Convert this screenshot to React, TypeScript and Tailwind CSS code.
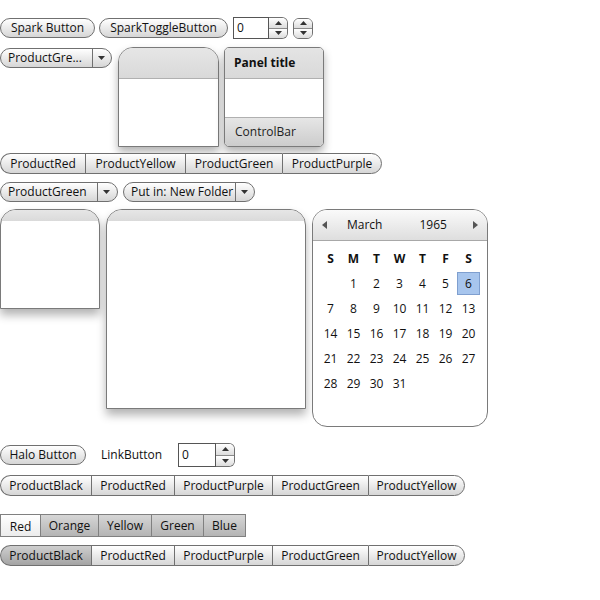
import React from "react";

const font = { fontFamily: '"Open Sans", "Noto Sans", sans-serif' };

function Btn({ w, children, cls = "" }: { w: string; children: React.ReactNode; cls?: string }) {
  return (
    <div
      className={`${w} h-[20px] rounded-full border border-[#707070] bg-gradient-to-b from-white to-[#d6d6d6] flex items-center justify-center text-[12px] text-[#111] leading-none ${cls}`}
    >
      {children}
    </div>
  );
}

function Down({ c = "#333" }: { c?: string }) {
  return (
    <svg width="7" height="4" viewBox="0 0 7 4">
      <path d="M0 0 L7 0 L3.5 4 Z" fill={c} />
    </svg>
  );
}
function Up({ c = "#333" }: { c?: string }) {
  return (
    <svg width="7" height="4" viewBox="0 0 7 4">
      <path d="M0 4 L7 4 L3.5 0 Z" fill={c} />
    </svg>
  );
}

function Spin({ w, h, full = false }: { w: string; h: string; full?: boolean }) {
  return (
    <div
      className={`${w} ${h} flex flex-col border border-[#707070] overflow-hidden ${full ? "rounded-[6px]" : "rounded-r-[6px] border-l-0"}`}
    >
      <div className="flex-1 flex items-center justify-center bg-gradient-to-b from-white to-[#dcdcdc] border-b border-[#8a8a8a]">
        <Up />
      </div>
      <div className="flex-1 flex items-center justify-center bg-gradient-to-b from-white to-[#dcdcdc]">
        <Down />
      </div>
    </div>
  );
}

function Stepper({ tw, h }: { tw: string; h: string }) {
  return (
    <div className={`flex ${h}`}>
      <div className={`${tw} h-full border border-[#555] bg-white flex items-center pl-[3px] text-[12px] text-[#111]`}>0</div>
      <Spin w="w-[19px]" h="h-full" />
    </div>
  );
}

function DropDown({ w, textW, label }: { w: string; textW: string; label: string }) {
  return (
    <div
      className={`${w} h-[20px] rounded-full border border-[#707070] bg-gradient-to-b from-white to-[#d6d6d6] flex items-center text-[12px] text-[#111] leading-none overflow-hidden`}
    >
      <div className={`${textW} pl-[7px] whitespace-nowrap h-full flex items-center border-r border-[#707070]`}>{label}</div>
      <div className="flex-1 flex items-center justify-center pr-[2px]">
        <Down />
      </div>
    </div>
  );
}

function ButtonBar({ items, widths, selected = -1 }: { items: string[]; widths: string[]; selected?: number }) {
  return (
    <div className="flex h-[21px]">
      {items.map((it, i) => {
        const first = i === 0;
        const last = i === items.length - 1;
        const sel = i === selected;
        return (
          <div
            key={it}
            className={`${widths[i]} h-full border-y border-l border-[#707070] flex items-center justify-center text-[12px] text-[#111] leading-none ${
              last ? "border-r rounded-r-full" : ""
            } ${first ? "rounded-l-full" : ""} ${
              sel ? "bg-gradient-to-b from-[#cfcfcf] to-[#a4a4a4]" : "bg-gradient-to-b from-white to-[#d6d6d6]"
            }`}
          >
            {it}
          </div>
        );
      })}
    </div>
  );
}

function Calendar() {
  const weeks: (number | null)[][] = [
    [null, 1, 2, 3, 4, 5, 6],
    [7, 8, 9, 10, 11, 12, 13],
    [14, 15, 16, 17, 18, 19, 20],
    [21, 22, 23, 24, 25, 26, 27],
    [28, 29, 30, 31, null, null, null],
  ];
  const names = ["S", "M", "T", "W", "T", "F", "S"];
  return (
    <div className="w-[176px] h-[218px] border border-[#7a7a7a] rounded-[15px] overflow-hidden bg-white">
      <div className="h-[31px] flex items-center bg-gradient-to-b from-[#fafafa] to-[#dedede] border-b border-[#a8a8a8] text-[12px] text-[#111]">
        <div className="ml-[9px]">
          <svg width="5" height="8" viewBox="0 0 5 8">
            <path d="M5 0 L5 8 L0 4 Z" fill="#555" />
          </svg>
        </div>
        <div className="ml-[20px]">March</div>
        <div className="ml-[37px]">1965</div>
        <div className="ml-auto mr-[9px]">
          <svg width="5" height="8" viewBox="0 0 5 8">
            <path d="M0 0 L0 8 L5 4 Z" fill="#555" />
          </svg>
        </div>
      </div>
      <div className="pt-[5px] pl-[6px] text-[12px] text-[#111]">
        <div className="grid grid-cols-[repeat(7,23px)] h-[25px] items-center font-bold">
          {names.map((n, i) => (
            <div key={i} className="text-center">
              {n}
            </div>
          ))}
        </div>
        {weeks.map((wk, r) => (
          <div key={r} className="grid grid-cols-[repeat(7,23px)] h-[25px] items-center">
            {wk.map((d, i) =>
              d === 6 ? (
                <div key={i} className="flex justify-center">
                  <div className="w-[23px] h-[23px] bg-[#a7c5ed] border border-[#7f9fcf] flex items-center justify-center">6</div>
                </div>
              ) : (
                <div key={i} className="text-center">
                  {d ?? ""}
                </div>
              )
            )}
          </div>
        ))}
      </div>
    </div>
  );
}

export default function App() {
  return (
    <div className="w-[600px] h-[600px] bg-white relative" style={font}>
      <div className="flex flex-col">
        {/* Row 1 */}
        <div className="mt-[17px] h-[22px] flex items-center">
          <Btn w="w-[95px]">Spark Button</Btn>
          <Btn w="w-[129px]" cls="ml-[4px]">SparkToggleButton</Btn>
          <div className="ml-[5px]">
            <Stepper tw="w-[36px]" h="h-[22px]" />
          </div>
          <div className="ml-[5px]">
            <Spin w="w-[20px]" h="h-[21px]" full />
          </div>
        </div>

        {/* Row 2 */}
        <div className="mt-[8px] flex items-start">
          <div className="mt-[1px]">
            <DropDown w="w-[112px]" textW="w-[92px]" label="ProductGre..." />
          </div>
          <div className="ml-[6px] w-[101px] h-[100px] border border-[#7a7a7a] rounded-t-[15px] overflow-hidden bg-white shadow-[0_5px_9px_rgba(0,0,0,0.3)]">
            <div className="h-[31px] bg-gradient-to-b from-[#e6e6e6] to-[#d9d9d9] border-b border-[#b0b0b0]" />
          </div>
          <div className="ml-[5px] w-[100px] h-[100px] border border-[#7a7a7a] rounded-[5px] overflow-hidden bg-white flex flex-col shadow-[0_5px_9px_rgba(0,0,0,0.3)]">
            <div className="h-[31px] bg-gradient-to-b from-[#e4e4e4] to-[#d9d9d9] border-b border-[#b0b0b0] flex items-center pl-[9px] text-[12px] font-bold text-[#111]">
              Panel title
            </div>
            <div className="flex-1" />
            <div className="h-[29px] bg-gradient-to-b from-[#e6e6e6] to-[#cccccc] border-t border-[#b0b0b0] flex items-center pl-[10px] text-[12px] text-[#222]">
              ControlBar
            </div>
          </div>
        </div>

        {/* Row 3 */}
        <div className="mt-[6px]">
          <ButtonBar
            items={["ProductRed", "ProductYellow", "ProductGreen", "ProductPurple"]}
            widths={["w-[85px]", "w-[100px]", "w-[97px]", "w-[100px]"]}
          />
        </div>

        {/* Row 4 */}
        <div className="mt-[8px] flex items-center">
          <DropDown w="w-[118px]" textW="w-[97px]" label="ProductGreen" />
          <div className="ml-[5px]">
            <DropDown w="w-[132px]" textW="w-[112px]" label="Put in: New Folder" />
          </div>
        </div>

        {/* Row 5 */}
        <div className="mt-[7px] flex items-start">
          <div className="w-[100px] h-[100px] border border-[#7a7a7a] rounded-t-[16px] overflow-hidden bg-white shadow-[0_6px_10px_rgba(0,0,0,0.3)]">
            <div className="h-[11px] bg-gradient-to-b from-[#e6e6e6] to-[#dadada]" />
          </div>
          <div className="ml-[6px] w-[200px] h-[200px] border border-[#7a7a7a] rounded-t-[16px] overflow-hidden bg-white shadow-[0_6px_10px_rgba(0,0,0,0.3)]">
            <div className="h-[11px] bg-gradient-to-b from-[#e6e6e6] to-[#dadada]" />
          </div>
          <div className="ml-[6px]">
            <Calendar />
          </div>
        </div>

        {/* Row 6 */}
        <div className="mt-[16px] h-[24px] flex items-center">
          <Btn w="w-[86px]">Halo Button</Btn>
          <div className="ml-[15px] text-[12px] text-[#111] w-[62px]">LinkButton</div>
          <div className="ml-[15px]">
            <Stepper tw="w-[38px]" h="h-[24px]" />
          </div>
        </div>

        {/* Row 7 */}
        <div className="mt-[8px]">
          <ButtonBar
            items={["ProductBlack", "ProductRed", "ProductPurple", "ProductGreen", "ProductYellow"]}
            widths={["w-[91px]", "w-[83px]", "w-[98px]", "w-[96px]", "w-[97px]"]}
          />
        </div>

        {/* Row 8 */}
        <div className="mt-[18px] flex h-[23px]">
          {[
            ["Red", "w-[40px]"],
            ["Orange", "w-[58px]"],
            ["Yellow", "w-[53px]"],
            ["Green", "w-[52px]"],
            ["Blue", "w-[43px]"],
          ].map(([t, w], i) => (
            <div
              key={t}
              className={`${w} h-full border-y border-l border-[#808080] ${i === 4 ? "border-r" : ""} flex items-center justify-center text-[12px] text-[#111] ${
                i === 0 ? "bg-gradient-to-b from-white to-[#ececec] pt-[2px]" : "bg-gradient-to-b from-[#d6d6d6] to-[#b4b4b4]"
              }`}
            >
              {t}
            </div>
          ))}
        </div>

        {/* Row 9 */}
        <div className="mt-[8px]">
          <ButtonBar
            items={["ProductBlack", "ProductRed", "ProductPurple", "ProductGreen", "ProductYellow"]}
            widths={["w-[91px]", "w-[83px]", "w-[98px]", "w-[96px]", "w-[97px]"]}
            selected={0}
          />
        </div>
      </div>
    </div>
  );
}
